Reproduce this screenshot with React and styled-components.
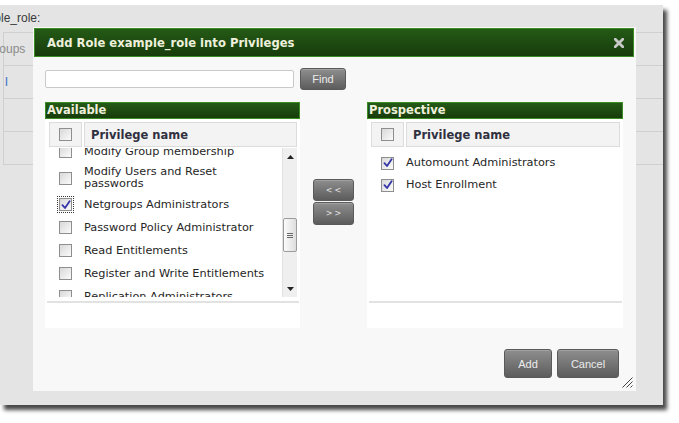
import React from 'react';
import styled, { createGlobalStyle } from 'styled-components';

const Global = createGlobalStyle`
  html, body { margin: 0; padding: 0; background: #ffffff; }
  body {
    width: 679px; height: 423px; overflow: hidden;
    font-family: "DejaVu Sans", Verdana, sans-serif;
  }
  * { box-sizing: border-box; }
`;

const Shot = styled.div`
  width: 679px;
  height: 423px;
  padding-top: 5px;
`;

const Frame = styled.div`
  position: relative;
  width: 663px;
  height: 400px;
  background: #e4e4e4;
  box-shadow: 4px 5px 4px rgba(0, 0, 0, 0.72);
`;

const FrameClip = styled.div`
  width: 100%;
  height: 100%;
  overflow: hidden;
`;

/* ---------- page behind the dialog ---------- */
const BgTitle = styled.div`
  height: 27px;
  padding-top: 6px;
  margin-left: -35px;
  font: 12px/14px "Liberation Sans", Arial, sans-serif;
  color: #3a3a3a;
  white-space: nowrap;
`;

const BgTable = styled.div`
  margin-left: 3px;
  border-left: 1px solid #cfcfcf;
  border-top: 1px solid #cfcfcf;
`;

const BgRow = styled.div`
  height: ${p => p.$h}px;
  border-bottom: 1px solid #cfcfcf;
  display: flex;
  align-items: center;
  font: 12px/14px "Liberation Sans", Arial, sans-serif;
  white-space: nowrap;
`;

const BgCell = styled.span`
  margin-left: ${p => p.$indent}px;
  color: ${p => p.$color};
  font-size: ${p => p.$size || 12}px;
`;

/* ---------- dialog ---------- */
const Modal = styled.div`
  position: absolute;
  left: 33px;
  top: 22px;
  width: 603px;
  height: 364px;
  background: #f8f8f8;
  padding: 1px;
  display: flex;
  flex-direction: column;
`;

const GreenBar = styled.div`
  border: 1px solid #3b8f22;
  background: linear-gradient(#245a16, #173c0b);
  color: #eef0dc;
  font-weight: bold;
  white-space: nowrap;
`;

const ModalHeader = styled(GreenBar)`
  height: 29px;
  margin-right: 1px;
  display: flex;
  align-items: center;
  justify-content: space-between;
  padding: 0 9px 0 12px;
  font-size: 11.6px;
`;

const Body = styled.div`
  padding: 0 0 0 11px;
  flex: 1;
  display: flex;
  flex-direction: column;
`;

const SearchRow = styled.div`
  margin-top: 11px;
  height: 22px;
  display: flex;
  align-items: center;
  gap: 6px;
`;

const SearchInput = styled.input`
  width: 249px;
  height: 18px;
  border: 1px solid #c9c9c9;
  border-radius: 2px;
  background: #fff;
  padding: 0 3px;
  outline: none;
`;

const GrayButton = styled.button`
  width: ${p => p.$w}px;
  height: ${p => p.$h}px;
  padding: 0;
  border: 1px solid #5a5a5a;
  border-radius: 3px;
  background: linear-gradient(#8e8e8e, #5c5c5c);
  color: #ececec;
  font: 11px "Liberation Sans", Arial, sans-serif;
  box-shadow: inset 0 1px 0 rgba(255, 255, 255, 0.18);
`;

const ArrowButton = styled(GrayButton)`
  font: 8px "DejaVu Sans", Verdana, sans-serif;
  letter-spacing: 2px;
  padding-left: 2px;
  color: #e4e4e4;
`;

const Columns = styled.div`
  margin-top: 12px;
  display: flex;
`;

const Panel = styled.div`
  width: ${p => p.$w}px;
  display: flex;
  flex-direction: column;
`;

const PanelTitle = styled(GreenBar)`
  height: 17px;
  font-size: 11.5px;
  line-height: 15px;
  padding-left: 1px;
`;

const PanelBody = styled.div`
  height: 209px;
  background: #fff;
  padding: 3px 3px 0 4px;
  display: flex;
  flex-direction: column;
`;

const HeadRow = styled.div`
  display: flex;
  gap: 2px;
  height: 25px;
`;

const HeadCell = styled.div`
  background: #f3f3f3;
  border: 1px solid #dcdcdc;
  display: flex;
  align-items: center;
  justify-content: ${p => (p.$check ? 'center' : 'flex-start')};
  width: ${p => (p.$check ? '33px' : 'auto')};
  flex: ${p => (p.$check ? '0 0 33px' : '1')};
  padding-left: ${p => (p.$check ? 0 : 6)}px;
  font-weight: bold;
  font-size: 11.5px;
  color: #303040;
`;

const ScrollArea = styled.div`
  margin-top: 1px;
  height: 149px;
  display: flex;
`;

const ListClip = styled.div`
  flex: 1;
  overflow: hidden;
`;

const List = styled.div`
  margin-top: ${p => p.$offset}px;
  display: flex;
  flex-direction: column;
`;

const Row = styled.div`
  display: flex;
  align-items: center;
  gap: 2px;
  min-height: ${p => p.$h}px;
`;

const CheckCol = styled.div`
  flex: 0 0 33px;
  display: flex;
  justify-content: center;
`;

const ItemText = styled.div`
  font-size: 11.3px;
  line-height: 12px;
  padding: 3px 0;
  color: #262626;
  white-space: nowrap;
`;

const Box = styled.span`
  width: 13px;
  height: 13px;
  border: 1px solid #8e8e8e;
  background: linear-gradient(135deg, #d8d8d8, #fbfbfb);
  display: inline-flex;
  align-items: center;
  justify-content: center;
  outline: ${p => (p.$focus ? '1px dotted #333' : 'none')};
  outline-offset: 1px;
`;

const Scrollbar = styled.div`
  flex: 0 0 15px;
  background: #efefef;
  border-left: 1px solid #e2e2e2;
  display: flex;
  flex-direction: column;
`;

const ScrollArrow = styled.div`
  height: 17px;
  display: flex;
  align-items: center;
  justify-content: center;
`;

const ThumbArea = styled.div`
  flex: 1;
  padding-top: ${p => p.$offset}px;
`;

const Thumb = styled.div`
  height: 34px;
  border: 1px solid #9c9c9c;
  border-radius: 2px;
  background: linear-gradient(90deg, #fbfbfb, #dedede);
  display: flex;
  flex-direction: column;
  align-items: center;
  justify-content: center;
  gap: 1px;
`;

const Grip = styled.span`
  width: 6px;
  height: 1px;
  background: #6a6a6a;
`;

const Rule = styled.div`
  margin: 4px -2px 0 -2px;
  border-top: 2px solid #e2e2e2;
`;

const Middle = styled.div`
  width: 67px;
  padding-top: 77px;
  display: flex;
  flex-direction: column;
  align-items: center;
  gap: 1px;
`;

const Footer = styled.div`
  margin-top: 21px;
  padding-right: 16px;
  display: flex;
  justify-content: flex-end;
  gap: 5px;
`;

const ResizeGrip = styled.svg`
  position: absolute;
  right: 3px;
  bottom: 3px;
`;

const Check = ({ checked, focus }) => (
  <Box $focus={focus}>
    {checked && (
      <svg width="10" height="10" viewBox="0 0 10 10">
        <path d="M1.5 5.2 L4 8 L8.6 1.2" fill="none" stroke="#3434a8" strokeWidth="1.8" strokeLinecap="round" strokeLinejoin="round" />
      </svg>
    )}
  </Box>
);

const available = [
  { text: 'Modify Group membership' },
  { text: ['Modify Users and Reset', 'passwords'] },
  { text: 'Netgroups Administrators', checked: true, focus: true },
  { text: 'Password Policy Administrator' },
  { text: 'Read Entitlements' },
  { text: 'Register and Write Entitlements' },
  { text: 'Replication Administrators' },
];

const prospective = [
  { text: 'Automount Administrators', checked: true },
  { text: 'Host Enrollment', checked: true },
];

const Item = ({ item, h }) => (
  <Row $h={h}>
    <CheckCol>
      <Check checked={item.checked} focus={item.focus} />
    </CheckCol>
    <ItemText>
      {Array.isArray(item.text) ? item.text.map((t, i) => <div key={i}>{t}</div>) : item.text}
    </ItemText>
  </Row>
);

const TableHead = () => (
  <HeadRow>
    <HeadCell $check>
      <Check />
    </HeadCell>
    <HeadCell>Privilege name</HeadCell>
  </HeadRow>
);

const Triangle = ({ down }) => (
  <svg width="7" height="4" viewBox="0 0 7 4">
    <path d={down ? 'M0 0 H7 L3.5 4 Z' : 'M0 4 H7 L3.5 0 Z'} fill="#222" />
  </svg>
);

export default function App() {
  return (
    <>
      <Global />
      <Shot>
        <Frame>
          <FrameClip>
            <BgTitle>example_role:</BgTitle>
            <BgTable>
              <BgRow $h={33}>
                <BgCell $indent={-18} $color="#8a8a8a">Groups</BgCell>
              </BgRow>
              <BgRow $h={33}>
                <BgCell $indent={1} $color="#3a72c4" $size={13}>l</BgCell>
              </BgRow>
              <BgRow $h={33} />
              <BgRow $h={33} />
            </BgTable>
          </FrameClip>

          <Modal>
            <ModalHeader>
              <span>Add Role example_role into Privileges</span>
              <svg width="10" height="10" viewBox="0 0 10 10">
                <path d="M1.3 1.3 L8.7 8.7 M8.7 1.3 L1.3 8.7" stroke="#c9c9c9" strokeWidth="2.8" strokeLinecap="square" />
              </svg>
            </ModalHeader>
            <Body>
              <SearchRow>
                <SearchInput />
                <GrayButton $w={46} $h={22}>Find</GrayButton>
              </SearchRow>
              <Columns>
                <Panel $w={255}>
                  <PanelTitle>Available</PanelTitle>
                  <PanelBody>
                    <TableHead />
                    <ScrollArea>
                      <ListClip>
                        <List $offset={-8}>
                          {available.map((it, i) => (
                            <Item key={i} item={it} h={23} />
                          ))}
                        </List>
                      </ListClip>
                      <Scrollbar>
                        <ScrollArrow><Triangle /></ScrollArrow>
                        <ThumbArea $offset={53}>
                          <Thumb><Grip /><Grip /><Grip /></Thumb>
                        </ThumbArea>
                        <ScrollArrow><Triangle down /></ScrollArrow>
                      </Scrollbar>
                    </ScrollArea>
                    <Rule />
                  </PanelBody>
                </Panel>
                <Middle>
                  <ArrowButton $w={41} $h={22}>&lt;&lt;</ArrowButton>
                  <ArrowButton $w={41} $h={23}>&gt;&gt;</ArrowButton>
                </Middle>
                <Panel $w={256}>
                  <PanelTitle>Prospective</PanelTitle>
                  <PanelBody>
                    <TableHead />
                    <ScrollArea>
                      <ListClip>
                        <List $offset={4}>
                          {prospective.map((it, i) => (
                            <Item key={i} item={it} h={22} />
                          ))}
                        </List>
                      </ListClip>
                    </ScrollArea>
                    <Rule />
                  </PanelBody>
                </Panel>
              </Columns>
              <Footer>
                <GrayButton $w={48} $h={29}>Add</GrayButton>
                <GrayButton $w={62} $h={29}>Cancel</GrayButton>
              </Footer>
            </Body>
            <ResizeGrip width="11" height="11" viewBox="0 0 11 11">
              <path d="M0.5 10.5 L10.5 0.5 M4.5 10.5 L10.5 4.5 M8.5 10.5 L10.5 8.5" stroke="#444" strokeWidth="1" />
            </ResizeGrip>
          </Modal>
        </Frame>
      </Shot>
    </>
  );
}
